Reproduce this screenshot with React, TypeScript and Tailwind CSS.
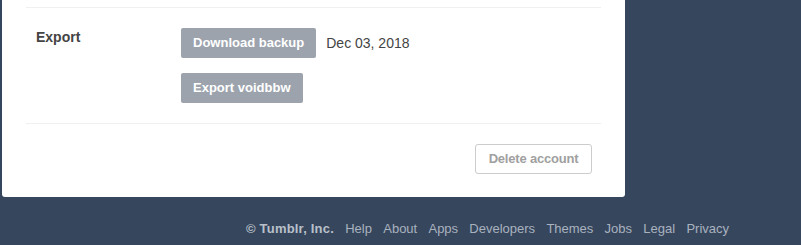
import React from 'react'

const footerLinks = ['Help', 'About', 'Apps', 'Developers', 'Themes', 'Jobs', 'Legal', 'Privacy']

export default function App() {
  return (
    <div className="h-[245px] w-full overflow-hidden bg-[#36465d] font-['Liberation_Sans',Arial,sans-serif]">
      <div className="ml-[2px] w-[623px] rounded-b-[3px] bg-white px-[24px] text-[#444]">
        <div className="h-[8px] border-b border-[#f0f0f0]" />

        <div className="flex border-b border-[#f0f0f0] py-[20px]">
          <div className="w-[155px] pl-[10px] text-[14px] font-bold leading-[18px]">Export</div>
          <div className="flex flex-col gap-[15px]">
            <div className="flex items-center gap-[10px]">
              <button className="h-[30px] rounded-[2px] bg-[#9ca3ad] px-[12px] text-[13px] font-bold text-white">
                Download backup
              </button>
              <span className="text-[14px]">Dec 03, 2018</span>
            </div>
            <div>
              <button className="h-[30px] rounded-[2px] bg-[#9ca3ad] px-[12px] text-[13px] font-bold text-white">
                Export voidbbw
              </button>
            </div>
          </div>
        </div>

        <div className="flex justify-end pr-[9px] pb-[23px] pt-[20px]">
          <button className="h-[30px] w-[117px] rounded-[3px] border border-[#cccccc] text-[13px] font-bold tracking-[-0.2px] text-[#a0a0a0]">
            Delete account
          </button>
        </div>
      </div>

      <div className="flex items-center gap-[11.25px] pl-[246px] pt-[23px] text-[13px] leading-[18px] text-[#a9b2bf]">
        <span className="font-bold tracking-[0.2px] text-[#b9c0ca]">© Tumblr, Inc.</span>
        {footerLinks.map((link) => (
          <a key={link} className="cursor-pointer">
            {link}
          </a>
        ))}
      </div>
    </div>
  )
}
